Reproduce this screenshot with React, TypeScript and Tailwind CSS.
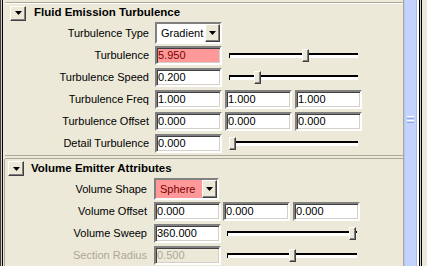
import React from "react";

const sunken =
  "border-2 border-t-[#808080] border-l-[#808080] border-r-white border-b-white shadow-[inset_1px_1px_0_#404040,inset_-1px_-1px_0_#D4D0C8]";
const raised =
  "border border-t-white border-l-white border-r-[#404040] border-b-[#404040] shadow-[inset_-1px_-1px_0_#808080]";

function Tri() {
  return (
    <svg width="7" height="4" viewBox="0 0 7 4">
      <path d="M0 0H7L3.5 4Z" fill="#000" />
    </svg>
  );
}

function Field({
  value,
  w = 67,
  pink,
  disabled,
}: {
  value: string;
  w?: number;
  pink?: boolean;
  disabled?: boolean;
}) {
  return (
    <div
      style={{ width: w }}
      className={`h-[19px] ${sunken} ${
        pink ? "bg-[#FF9999] text-[#7A0000]" : disabled ? "bg-[#ECE9D8] text-[#ACA899]" : "bg-white text-black"
      } pl-[1px] flex items-center text-[11px] leading-none`}
    >
      {value}
    </div>
  );
}

function Slider({ pos, w = 129 }: { pos: number; w?: number }) {
  return (
    <div style={{ width: w }} className="relative h-[13px]">
      <div className="absolute left-0 right-0 top-[4px] h-[5px] border-t-2 border-t-black border-l border-l-black bg-white" />
      <div
        style={{ left: pos }}
        className={`absolute top-0 w-[7px] h-[13px] bg-[#ECE9D8] ${raised}`}
      />
    </div>
  );
}

function Dropdown({ value, pink, w = 67 }: { value: string; pink?: boolean; w?: number }) {
  return (
    <div style={{ width: w }} className={`h-[22px] flex ${sunken}`}>
      <div
        className={`flex-1 flex items-center pl-[4px] text-[11px] leading-none ${
          pink ? "bg-[#FF9999] text-[#7A0000]" : "bg-white text-black"
        }`}
      >
        {value}
      </div>
      <div className={`w-[15px] h-full flex items-center justify-center bg-[#ECE9D8] ${raised}`}>
        <Tri />
      </div>
    </div>
  );
}

function Row({
  label,
  labelW,
  disabled,
  children,
}: {
  label: string;
  labelW: number;
  disabled?: boolean;
  children: React.ReactNode;
}) {
  return (
    <div className="h-[22px] flex items-center">
      <div
        style={{ width: labelW }}
        className={`text-right text-[11px] leading-none ${disabled ? "text-[#ACA899]" : "text-black"}`}
      >
        {label}
      </div>
      <div className="ml-[6px] flex items-center">{children}</div>
    </div>
  );
}

function Header({ title, btnX, titleX, h }: { title: string; btnX: number; titleX: number; h: number }) {
  return (
    <div style={{ height: h }} className="flex items-center">
      <div style={{ marginLeft: btnX }} className={`w-[16px] h-[15px] flex items-center justify-center bg-[#ECE9D8] ${raised}`}>
        <Tri />
      </div>
      <div style={{ marginLeft: titleX }} className="font-bold text-[11.5px] leading-none text-black">
        {title}
      </div>
    </div>
  );
}

export default function App() {
  return (
    <div className="w-[427px] h-[266px] overflow-hidden flex bg-[#ECE9D8] font-['Liberation_Sans',Arial,sans-serif]">
      {/* left edges */}
      <div className="w-[1px] h-full bg-[#404040]" />
      <div className="w-[1px] h-full bg-[#D4D0C8]" />
      <div className="w-[1px] h-full bg-black" />
      {/* main */}
      <div className="w-[400px] h-full flex flex-col">
        <div className="h-[2px]" />
        <div className="ml-[2px] h-[2px] border-t border-t-[#ACA899] border-b border-b-white" />
        <Header title="Fluid Emission Turbulence" btnX={7} titleX={8} h={18} />
        <Row label="Turbulence Type" labelW={146}>
          <Dropdown value="Gradient" />
        </Row>
        <Row label="Turbulence" labelW={146}>
          <Field value="5.950" pink />
          <div className="ml-[7px]">
            <Slider pos={73} />
          </div>
        </Row>
        <Row label="Turbulence Speed" labelW={146}>
          <Field value="0.200" />
          <div className="ml-[7px]">
            <Slider pos={25} />
          </div>
        </Row>
        <Row label="Turbulence Freq" labelW={146}>
          <Field value="1.000" />
          <div className="ml-[3px]">
            <Field value="1.000" />
          </div>
          <div className="ml-[3px]">
            <Field value="1.000" />
          </div>
        </Row>
        <Row label="Turbulence Offset" labelW={146}>
          <Field value="0.000" />
          <div className="ml-[3px]">
            <Field value="0.000" />
          </div>
          <div className="ml-[3px]">
            <Field value="0.000" />
          </div>
        </Row>
        <Row label="Detail Turbulence" labelW={146}>
          <Field value="0.000" />
          <div className="ml-[7px]">
            <Slider pos={0} />
          </div>
        </Row>
        <div className="ml-[2px] mt-[1px] h-[4px] border-t border-t-[#ACA899] border-b border-b-[#ACA899]" />
        <div className="flex-1 flex">
          <div className="w-[1px] bg-[#ACA899] ml-[1px]" />
          <div className="flex-1 flex flex-col">
            <Header title="Volume Emitter Attributes" btnX={3} titleX={7} h={19} />
            <Row label="Volume Shape" labelW={142}>
              <div className="ml-[1px]">
                <Dropdown value="Sphere" pink w={65} />
              </div>
            </Row>
            <Row label="Volume Offset" labelW={142}>
              <div className="ml-[1px]">
                <Field value="0.000" />
              </div>
              <div className="ml-[2px]">
                <Field value="0.000" />
              </div>
              <div className="ml-[3px]">
                <Field value="0.000" />
              </div>
            </Row>
            <Row label="Volume Sweep" labelW={142}>
              <div className="ml-[1px]">
                <Field value="360.000" />
              </div>
              <div className="ml-[6px]">
                <Slider pos={122} w={130} />
              </div>
            </Row>
            <Row label="Section Radius" labelW={142} disabled>
              <div className="ml-[1px]">
                <Field value="0.500" disabled />
              </div>
              <div className="ml-[6px]">
                <Slider pos={62} w={130} />
              </div>
            </Row>
          </div>
        </div>
      </div>
      {/* right frame edge */}
      <div className="w-[1px] h-full bg-[#ACA899]" />
      {/* scrollbar */}
      <div className="w-[13px] h-full bg-[#C3D3FD] border-l border-l-[#B4C6F0] border-r border-r-[#A8BCEB] flex items-center justify-center">
        <div className="flex flex-col gap-[1px] mt-[-28px]">
          <div className="w-[7px] h-[1px] bg-white" />
          <div className="w-[7px] h-[1px] bg-[#8EA8E8]" />
          <div className="w-[7px] h-[1px] bg-white" />
          <div className="w-[7px] h-[1px] bg-[#8EA8E8]" />
        </div>
      </div>
      <div className="w-[2px] h-full bg-white" />
      <div className="w-[1px] h-full bg-black" />
      <div className="w-[1px] h-full bg-[#D4D0C8]" />
      <div className="w-[1px] h-full bg-black" />
      <div className="flex-1 h-full bg-[#ECE9D8]" />
    </div>
  );
}
